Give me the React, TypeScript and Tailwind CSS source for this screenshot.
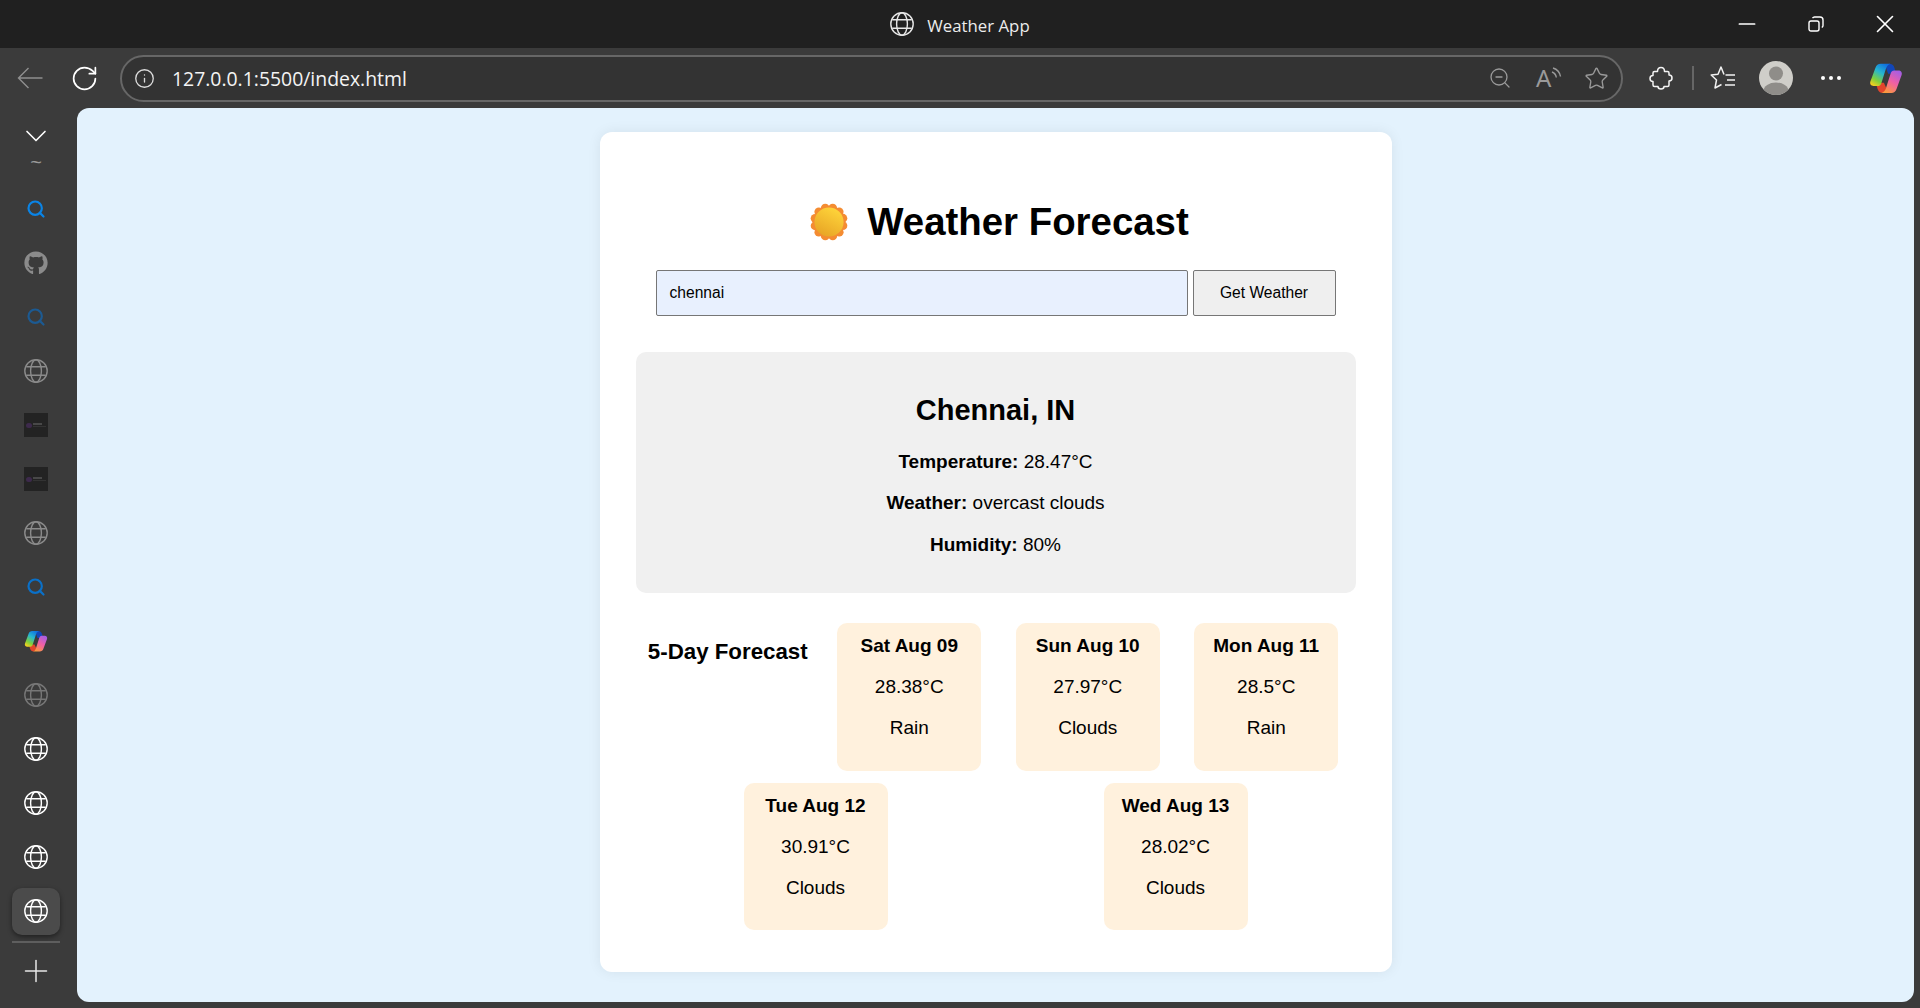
import { RotateCw, Info, ZoomOut, Star, Minus, Plus, X, ChevronDown, Search } from "lucide-react";
import { FaGithub } from "react-icons/fa";

function Globe({ cls, size = 24 }: { cls: string; size?: number }) {
  return (
    <svg width={size} height={size} viewBox="0 0 24 24" fill="none" stroke="currentColor" strokeWidth="1.4" className={cls}>
      <circle cx="12" cy="12" r="11.2" />
      <ellipse cx="12" cy="12" rx="5.4" ry="11.2" />
      <path d="M2.2 7.8H21.8M2.2 16.2H21.8" />
    </svg>
  );
}

function Copilot({ size }: { size: number }) {
  const id = `c${size}`;
  return (
    <svg width={size} height={size} viewBox="0 0 32 32">
      <defs>
        <linearGradient id={`${id}a`} x1="0.75" y1="0" x2="0.2" y2="1">
          <stop offset="0" stopColor="#0f6fe0" />
          <stop offset="0.4" stopColor="#27b6d0" />
          <stop offset="0.75" stopColor="#7fd03c" />
          <stop offset="1" stopColor="#f5d020" />
        </linearGradient>
        <linearGradient id={`${id}b`} x1="0.8" y1="0" x2="0.25" y2="1">
          <stop offset="0" stopColor="#a45ee5" />
          <stop offset="0.5" stopColor="#f05fa5" />
          <stop offset="1" stopColor="#fb9a3c" />
        </linearGradient>
      </defs>
      <path d="M19 2.5C21.5 2.5 23.2 3.8 24 6.5L25.5 12H18L15.5 5Z" fill="#1246b8" />
      <path d="M13 30C10.5 30 8.8 28.7 8 26L6.5 20.5H14L17 27Z" fill="#e2452c" />
      <path d="M11 2.5C8.6 2.5 7 3.6 6 6.5L1.3 19.3C0.5 21.6 2 23.5 4.3 23.5H8.2C10 23.5 11 22.6 11.7 20.6L15.6 8.3C16.4 5.4 17.6 3.4 20 2.5Z" fill={`url(#${id}a)`} />
      <path d="M21 30C23.4 30 25 28.9 26 26L30.7 13.2C31.5 10.9 30 9 27.7 9H23.8C22 9 21 9.9 20.3 11.9L16.4 24.2C15.6 27.1 14.4 29.1 12 30Z" fill={`url(#${id}b)`} />
    </svg>
  );
}

function Sun() {
  const petals = Array.from({ length: 12 }, (_, i) => (i * Math.PI) / 6);
  return (
    <svg width="38" height="38" viewBox="0 0 38 38" className="shrink-0">
      <defs>
        <linearGradient id="sun" x1="0.75" y1="0.1" x2="0.3" y2="0.95">
          <stop offset="0" stopColor="#fdd239" />
          <stop offset="1" stopColor="#e9a626" />
        </linearGradient>
      </defs>
      {petals.map((a, i) => (
        <circle key={i} cx={19 + 14.4 * Math.cos(a + 0.26)} cy={19 + 14.4 * Math.sin(a + 0.26)} r="4.4" fill="#f48c32" />
      ))}
      <circle cx="19" cy="19" r="15" fill="#f48c32" />
      <circle cx="19" cy="19" r="14.6" fill="url(#sun)" />
    </svg>
  );
}

function DarkThumb() {
  return (
    <div className="flex h-6 w-6 items-center justify-center gap-[1px] bg-[#232323]">
      <div className="h-[5px] w-[6px] rounded-full bg-[#3d2a4c]" />
      <div className="flex flex-col gap-[1px]">
        <div className="h-[2px] w-[9px] bg-[#484848]" />
        <div className="h-[1px] w-[13px] bg-[#333333]" />
      </div>
    </div>
  );
}

function SideSlot({ children, active }: { children: React.ReactNode; active?: boolean }) {
  return (
    <div className={`flex h-[47px] w-12 items-center justify-center rounded-[10px] ${active ? "bg-[#4b4b4b] shadow-[0_2px_5px_rgba(0,0,0,0.45)]" : ""}`}>
      {children}
    </div>
  );
}

function SearchGlyph({ cls }: { cls: string }) {
  return <Search size={20} strokeWidth={2.6} className={cls} />;
}

function Sidebar() {
  return (
    <aside className="flex w-[77px] shrink-0 flex-col items-center pr-[5px]">
      <div className="flex h-[46px] w-12 items-end justify-center">
        <ChevronDown size={36} strokeWidth={1.1} className="text-white" />
      </div>
      <div className="mt-[1px] flex h-[14px] items-center justify-center text-[20px] leading-none text-[#9a9a9a]" style={{ fontFamily: "Liberation Sans, sans-serif" }}>~</div>
      <div className="mt-[16.5px] flex flex-col items-center gap-[7px]">
        <SideSlot><SearchGlyph cls="text-[#0a84e6]" /></SideSlot>
        <SideSlot><FaGithub size={24} className="text-[#8b8b8b]" /></SideSlot>
        <SideSlot><SearchGlyph cls="text-[#1c5a92]" /></SideSlot>
        <SideSlot><Globe cls="text-[#8b8b8b]" /></SideSlot>
        <SideSlot><DarkThumb /></SideSlot>
        <SideSlot><DarkThumb /></SideSlot>
        <SideSlot><Globe cls="text-[#8b8b8b]" /></SideSlot>
        <SideSlot><SearchGlyph cls="text-[#0a70c8]" /></SideSlot>
        <SideSlot><Copilot size={24} /></SideSlot>
        <SideSlot><Globe cls="text-[#777777]" /></SideSlot>
        <SideSlot><Globe cls="text-white" /></SideSlot>
        <SideSlot><Globe cls="text-white" /></SideSlot>
        <SideSlot><Globe cls="text-white" /></SideSlot>
        <SideSlot active><Globe cls="text-white" /></SideSlot>
      </div>
      <div className="mt-[6px] h-[2px] w-12 bg-[#5e5e5e]" />
      <Plus size={36} strokeWidth={1} className="mt-[10px] text-[#e8e8e8]" />
    </aside>
  );
}

function ReadAloud() {
  return (
    <svg width="26" height="26" viewBox="0 0 26 26" fill="none" stroke="#9a9a9a" strokeWidth="1.4" className="overflow-visible">
      <text x="0" y="22" fontSize="24" fill="#9a9a9a" stroke="none" fontFamily="Noto Sans, sans-serif">A</text>
      <path d="M16 7C18.5 8 20 10 20.3 12.5M17 3C21 4.2 23.8 7.5 24.5 11.5" />
    </svg>
  );
}

function FavList() {
  return (
    <svg width="26" height="26" viewBox="0 0 26 26" fill="none" stroke="#f2f2f2" strokeWidth="1.5" strokeLinejoin="round">
      <path d="M14 9.5L11 2L8 9.3L1.2 10L6.5 15L5 23L11.5 19.5" />
      <path d="M15.5 10H25M17 15H25M15 20H25" />
    </svg>
  );
}

function PuzzleIcon() {
  return (
    <svg width="24" height="24" viewBox="0 0 24 24" fill="none" stroke="#f4f4f4" strokeWidth="1.5" strokeLinejoin="round" className="ml-[26px]">
      <path d="M8.5 5.5C8.5 3 10 1.5 12 1.5C14 1.5 15.5 3 15.5 5.5H18.5C19.5 5.5 20 6 20 7V9C22 9 23 10.5 23 12C23 13.5 22 15 20 15V19C20 20 19.5 20.5 18.5 20.5H15C15 22 14 23 12 23C10 23 9 22 9 20.5H5.5C4.5 20.5 4 20 4 19V15.5C2 15.5 1 14 1 12.5C1 11 2 9.5 4 9.5V7C4 6 4.5 5.5 5.5 5.5Z" />
    </svg>
  );
}

function BackArrow() {
  return (
    <svg width="26" height="24" viewBox="0 0 26 24" fill="none" stroke="#8f8f8f" strokeWidth="1.4">
      <path d="M1.5 12H25.5M11.5 2L1.5 12L11.5 22" />
    </svg>
  );
}

function Avatar() {
  return (
    <svg width="34" height="34" viewBox="0 0 34 34">
      <clipPath id="av"><circle cx="17" cy="17" r="17" /></clipPath>
      <circle cx="17" cy="17" r="17" fill="#cfcec9" />
      <g clipPath="url(#av)" fill="#8f8d89">
        <circle cx="17" cy="12.5" r="7" />
        <ellipse cx="17" cy="30" rx="12.5" ry="8.5" />
      </g>
    </svg>
  );
}

function Restore() {
  return (
    <svg width="16" height="16" viewBox="0 0 16 16" fill="none" stroke="#fff" strokeWidth="1.4">
      <rect x="1" y="5" width="10" height="10" rx="2" />
      <path d="M4.5 2.2C5 1.4 5.6 1 6.5 1H12C13.8 1 15 2.2 15 4V9.5C15 10.4 14.6 11 13.8 11.5" />
    </svg>
  );
}

function TitleBar() {
  return (
    <header className="grid h-12 grid-cols-[1fr_auto_1fr] items-center bg-[#202020]">
      <div />
      <div className="flex items-center gap-[13px]">
        <Globe cls="text-[#e6e6e6]" />
        <span className="mt-[3px] text-[16.8px] text-[#ececec]" style={{ fontFamily: "'Open Sans', sans-serif" }}>Weather App</span>
      </div>
      <div className="flex justify-end">
        <div className="flex h-10 w-[69px] items-center justify-center"><Minus size={26} strokeWidth={1.6} className="text-white" /></div>
        <div className="flex h-10 w-[69px] items-center justify-center"><Restore /></div>
        <div className="flex h-10 w-[70px] items-center justify-center"><X size={30} strokeWidth={1.3} className="text-white" /></div>
      </div>
    </header>
  );
}

function Toolbar() {
  return (
    <div className="flex h-[60px] items-center bg-[#3b3b3b] pl-[17px]">
      <BackArrow />
      <RotateCw size={29} strokeWidth={1.4} className="ml-[26.5px] text-white" />
      <div className="ml-[21.5px] flex h-[47px] w-[1503px] items-center rounded-full border-2 border-[#676767] bg-[#333333] pl-[12px]">
        <Info size={21} strokeWidth={1.5} className="text-[#dddddd]" />
        <span className="ml-[17px] mt-[2px] text-[19.4px] text-[#f4f4f4]" style={{ fontFamily: "'Open Sans', sans-serif" }}>127.0.0.1:5500/index.html</span>
        <div className="ml-auto flex items-center pr-[12.5px]">
          <ZoomOut size={24} strokeWidth={1.3} className="text-[#9a9a9a]" />
          <div className="ml-[24px]"><ReadAloud /></div>
          <Star size={25} strokeWidth={1.3} className="ml-[21.5px] text-[#9a9a9a]" />
        </div>
      </div>
      <PuzzleIcon />
      <div className="ml-[19px] h-6 w-[2px] bg-[#666666]" />
      <div className="ml-[16px]"><FavList /></div>
      <div className="ml-[23px]"><Avatar /></div>
      <div className="ml-[28px] flex w-[20px] justify-between">
        <span className="h-[4px] w-[4px] rounded-full bg-white" />
        <span className="h-[4px] w-[4px] rounded-full bg-white" />
        <span className="h-[4px] w-[4px] rounded-full bg-white" />
      </div>
      <div className="ml-[28px]"><Copilot size={34} /></div>
    </div>
  );
}

function Day({ date, temp, desc }: { date: string; temp: string; desc: string }) {
  return (
    <div className="flex h-[147.5px] w-[144px] flex-col items-center gap-[21px] rounded-[10px] bg-[#fff1dd] pt-[13px] text-[19px] leading-[20px]">
      <strong className="font-bold">{date}</strong>
      <span>{temp}</span>
      <span>{desc}</span>
    </div>
  );
}

export default function App() {
  return (
    <div className="flex h-[1008px] w-[1920px] flex-col overflow-hidden bg-[#3b3b3b]">
      <TitleBar />
      <Toolbar />
      <div className="flex flex-1">
        <Sidebar />
        <main className="mb-[6px] flex w-[1837px] justify-center rounded-[12px] bg-[#e3f2fd] pt-[24px]" style={{ fontFamily: "'Liberation Sans', Arial, sans-serif" }}>
          <section className="flex h-[840px] w-[792px] flex-col items-center rounded-[12px] bg-white px-[36px] pt-[67px] text-black shadow-[0_0_14px_rgba(0,0,0,0.07)]">
            <h1 className="flex h-[46px] items-center gap-[19px] pl-[8px] text-[38.4px] font-bold leading-[46px]">
              <Sun />
              Weather Forecast
            </h1>
            <div className="mt-[25px] flex h-[46px] gap-[5px] text-[15.6px]">
              <div className="flex w-[532px] items-center rounded-[2px] border border-[#767676] bg-[#e8f0fe] pl-[13px]">chennai</div>
              <button className="w-[143px] rounded-[2px] border border-[#767676] bg-[#efefef]">Get Weather</button>
            </div>
            <div className="mt-[36px] flex h-[241px] w-[720px] flex-col items-center rounded-[10px] bg-[#f0f0f0] pt-[41px] text-[19px] leading-[24px]">
              <h2 className="text-[29px] font-bold leading-[34px]">Chennai, IN</h2>
              <p className="mt-[23px]"><strong>Temperature:</strong> 28.47°C</p>
              <p className="mt-[17px]"><strong>Weather:</strong> overcast clouds</p>
              <p className="mt-[17.5px]"><strong>Humidity:</strong> 80%</p>
            </div>
            <div className="mt-[30px] flex w-[720px] flex-wrap justify-around gap-y-[12px]">
              <h3 className="mt-[17px] flex h-6 w-[150px] justify-center whitespace-nowrap text-[22.3px] font-bold leading-[24px]">5-Day Forecast</h3>
              <Day date="Sat Aug 09" temp="28.38°C" desc="Rain" />
              <Day date="Sun Aug 10" temp="27.97°C" desc="Clouds" />
              <Day date="Mon Aug 11" temp="28.5°C" desc="Rain" />
              <Day date="Tue Aug 12" temp="30.91°C" desc="Clouds" />
              <Day date="Wed Aug 13" temp="28.02°C" desc="Clouds" />
            </div>
          </section>
        </main>
      </div>
    </div>
  );
}
